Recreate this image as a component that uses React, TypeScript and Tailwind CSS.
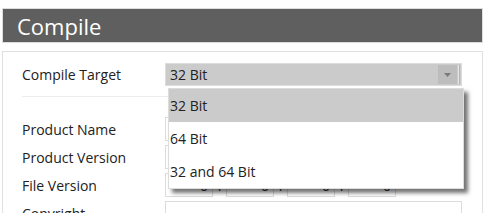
const rows = [
  { label: 'Product Name', kind: 'text' },
  { label: 'Product Version', kind: 'text' },
  { label: 'File Version', kind: 'version' },
  { label: 'Copyright', kind: 'text' },
];

const options = ['32 Bit', '64 Bit', '32 and 64 Bit'];

export default function App() {
  return (
    <div
      className="w-[491px] h-[213px] overflow-hidden bg-white pt-2 px-[2px]"
      style={{ fontFamily: '"Open Sans", "Noto Sans", sans-serif' }}
    >
      <div className="w-[481px] h-[35px] border border-[#dddddd] bg-[#5f5f5f] flex items-center pl-[14px]">
        <span className="text-[22px] text-white leading-none">Compile</span>
      </div>

      <div className="relative mt-2 w-[481px] h-[200px] border border-[#e0e0e0] pt-[11px] pl-[19px]">
        <div className="flex items-center h-[23px]">
          <span className="w-[143px] text-[14px] text-[#222]">Compile Target</span>
          <div className="flex items-center w-[297px] h-[23px] border border-[#dcdcdc] bg-[#cbcbcb] pl-1">
            <span className="flex-1 text-[14px] text-[#222]">32 Bit</span>
            <div className="w-[19px] h-[19px] bg-[#bdbdbd] flex items-center justify-center">
              <svg width="7" height="4" viewBox="0 0 7 4">
                <path d="M0 0h7L3.5 4z" fill="#7a7a7a" />
              </svg>
            </div>
            <div className="w-[1px] h-[19px] ml-[1px] bg-[#e6e6e6]" />
            <div className="w-[1px] h-[19px] mr-[1px] bg-[#b5b5b5]" />
          </div>
        </div>

        <div className="mt-[10px] mr-[19px] h-px bg-[#ececec]" />

        <div className="mt-[20px] flex flex-col gap-[4px]">
          {rows.map((row) => (
            <div key={row.label} className="flex items-center h-[24px]">
              <span className="w-[143px] text-[14px] text-[#222]">{row.label}</span>
              {row.kind === 'version' ? (
                <div className="flex items-center">
                  {[0, 1, 2, 3].map((i) => (
                    <div key={i} className="flex items-center">
                      {i > 0 && <span className="w-[13px] text-center text-[14px] text-[#333]">.</span>}
                      <div className="w-[48px] h-[24px] border border-[#dcdcdc] flex items-center justify-end pr-[4px] text-[14px] text-[#333]">
                        0
                      </div>
                    </div>
                  ))}
                </div>
              ) : (
                <div className="w-[297px] h-[24px] border border-[#dcdcdc]" />
              )}
            </div>
          ))}
        </div>

        <div className="absolute left-[165px] top-[36px] w-[296px] border border-[#dcdcdc] bg-white shadow-[4px_4px_4px_rgba(0,0,0,0.55)]">
          {options.map((opt, i) => (
            <div
              key={opt}
              className={`h-[33px] flex items-center pl-[1px] text-[14px] text-[#222] ${
                i === 0 ? 'bg-[#cbcbcb]' : ''
              }`}
            >
              {opt}
            </div>
          ))}
        </div>
      </div>
    </div>
  );
}
